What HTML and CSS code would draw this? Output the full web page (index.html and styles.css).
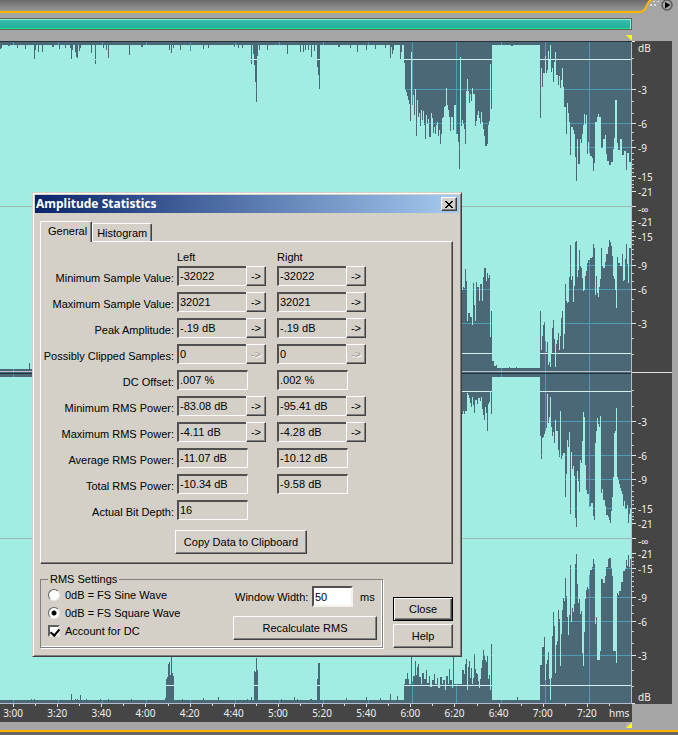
FILE: index.html
```
<!DOCTYPE html>
<html lang="en">

<head>
    <meta charset="UTF-8">
    <meta name="viewport" content="width=device-width, initial-scale=1.0">
    <title>Amplitude Statistics</title>
    <link rel="stylesheet" href="styles.css">
</head>

<body>
    <div class="editor">
        <header class="top">
            <div class="top-bar"></div>
            <svg class="top-end" width="46" height="18" viewBox="632 0 46 18">
                <defs>
                    <linearGradient id="metal" x1="0" y1="0" x2="0" y2="1">
                        <stop offset="0" stop-color="#6b6b6b" />
                        <stop offset="1" stop-color="#989898" />
                    </linearGradient>
                </defs>
                <path d="M632 0H649L644 9Q643 11 640 11H632Z" fill="url(#metal)" />
                <path d="M632 12H640Q643 12 645 9L648 3Q650 0 653 -1" fill="none" stroke="#ffb400" stroke-width="2" />
                <path d="M650 4h2v2h-2zM654 4h2v2h-2zM653 1h2v1h-2zM657 1h2v1h-2z" fill="#ddd" />
                <circle cx="667" cy="5" r="5" fill="#aaa" stroke="#5c5c5c" stroke-width="1.5" />
                <path d="M665 2L670.500 5L665 8.500Z" fill="#000" />
            </svg>
        </header>

        <div class="range">
            <div class="range-bar"></div>
        </div>
        <div class="marker-row">
            <svg width="6" height="6" viewBox="0 0 6 6"><path d="M0 0H6V6Z" fill="#ff0" /></svg>
        </div>

        <div class="wave-row">
            <svg class="wave" viewBox="0 41 632 663" preserveAspectRatio="none" shape-rendering="crispEdges">
                <clipPath id="quiet">
                    <!-- left channel, upper half -->
                    <path d="M0 41V49H1V48H2V45H8V46h2V45H17V48h1V45H25V49h1V45H34V60h1V50h1V45H38V52h1V45H42V52h1V45H52V47h2V45H59V49h1V45H65V48h1V45H70V48h1V60h1V50h1V45H75V52h1V57h1V58h1V45H79V51h1V48h1V45H91V53h1V45H95V64h1V45H103V48h1V45H106V50h1V45h1V58h1V45H129V55h1V45H141V47h2V45H169V50h1V45h1V53h1V45h1V48h1V45H180V50h1V45H190V51h1V45H203V49h1V45H208V48h1V45H234V47h1V45H238V48h1V45h3V48h1V45H251V64h1V45h1V54h1V65h1V82h1V102h1V56h1V45H259V50h1V45H267V50h1V45H287V54h1V45H300V52h1V45h2V52h1V45h1V50h1V45h2V50h1V45h2V57h1V45h2V51h1V45H317V67h1V75h1V89h1V45H338V47h2V45H350V48h1V45H357V52h1V45H366V50h1V45H375V49h1V45H385V48h1V45H390V58h1V47h1V54h1V50h1V45H400V59h1V52h1V45H404V63h1V90h1V92h1V96h1V100h1V104h1V121h1V52h1V105h1V95h1V115h1V89h1V136h1V100h1V117h1V113h1V126h1V110h1V120h1V111h1V125h1V139h1V115h1V124h1V119h1V137H431V113h1V118h1V133h1V127h1V134h1V125h1V122h1V136h1V130h1V144h1V134h1V118h1V117h1V107h1V106h1V88h1V105h1V110h1V117h1V131h1V117H453V130h1V105H456V134H458V142h1V169h1V57h1V126h1V120h1V124h1V129h1V144h1V91h1V79h1V91h1V103h1V94h1V101h1V88h1V94H475V126h1V121h1V115h1V111h1V118h1V124h1V112h1V122h1V129h1V136h1V146H487V144h1V125h1V121h1V64h1V109h1V45H511V46h2V45H540V118h1V68h1V87h1V73H545V56h1V73h1V70h1V51h1V60h1V45h1V72h1V68h1V82h1V62h1V52h1V75H558V85h1V76h1V88h1V80h1V68h1V87h1V107H566V134h1V103h1V113h1V122h1V155h1V127H573V130h1V134h1V157h1V181h1V139h1V164H580V139h1V143h1V134h1V125h1V114h1V124h1V115h1V154h1V142h1V153h1V156H592V158h1V171h1V163h1V122H597V117h1V114h1V117H601V148H603V139H605V135h1V154h1V161H609V165H611V162H613V149h1V138h1V100H617V143h1V150H620V139H622V155H624V151H626V170h1V153H629V162H632V41Z" />
                    <!-- left channel, lower half -->
                    <path d="M0 374V369H29V363h1V369H461V290H463V287h1V288h1V269h1V281h1V321h1V313H470V317H472V325h1V283h1V305h1V321h1V282h1V287H479V301h1V284H482V301h1V277h1V268H486V281h1V273h1V278h1V275h1V337h1V311h1V361H494V366H496V365h1V368H509V367h1V368H516V367h1V368H540V311h1V350h1V336h1V325h1V322h1V341h1V352h1V342h1V365h1V362h1V367h1V354h1V328h1V320h1V339h1V367h1V344h1V340h1V333h1V350h1V336h1V318h1V311h1V349h1V334h1V284h1V301h1V303h1V302h1V277h1V245h1V280h1V276h1V302h1V286h1V242h1V241h1V277h1V270h1V250h1V266h1V268h1V278h1V291h1V290h1V276h1V271h1V263h1V260H590V258H592V257h1V244h1V248h1V295h1V276h1V293h1V297h1V287h1V279h1V248h1V266h1V268H605V262h1V254H608V247h1V240h1V242h1V246h1V256h1V276h1V279h1V290h1V308h1V257h1V263H620V266H622V254h1V281h1V280h1V259h1V244h1V264h1V283h1V248H631V247H632V374Z" />
                    <!-- right channel, upper half -->
                    <path d="M0 373V377H461V414H463V411h1V414h1V411H467V393h1V395h1V398h1V403h1V407h1V397h1V405h1V413h1V400H477V404h1V398H480V401h1V397h1V409h1V415h1V420h1V407h1V413h1V431h1V404h1V402h1V391h1V414h1V377H540V436h1V459h1V438h1V437h1V434h1V431h1V428h1V394h1V423h1V417h1V397h1V427h1V436h1V432h1V443h1V420h1V431H558V450h1V457h1V411h1V459h1V456h1V453H565V497h1V474h1V440h1V447h1V432h1V514h1V452h1V469h1V466h1V476h1V518h1V527h1V471h1V481h1V492h1V460h1V463h1V441h1V412h1V417h1V465h1V490h1V494H589V507h1V506h1V503H593V516h1V520h1V443h1V431h1V418h1V424h1V427h1V416h1V493h1V489h1V500H605V506h1V515H608V517h1V520h1V523h1V511h1V497h1V477h1V433h1V431h1V408h1V477h1V480h1V484h1V488h1V491h1V494h1V506h1V501h1V509H627V505h1V523h1V514h1V509H632V373Z" />
                    <!-- right channel, lower half -->
                    <path d="M0 703V700H31V699h1V700H34V699h1V700H71V694h1V700H75V699h1V700h1V699h1V700H80V695h1V700H86V699h1V700H100V699h1V700H108V699h1V700H131V699h1V700H165V698h1V679h1V677h1V664h1V662h1V675h1V656h1V673h1V676h1V700H182V699h1V700H203V698h1V700H218V697h1V700H247V699h1V700H251V697h1V700H254V671h1V672h1V658h1V670h1V700H281V699h1V700H294V697h1V700H297V699h1V700H310V699h2V700H317V679h1V663h2V700H346V698h1V700H366V697h1V700H380V698h1V700H390V694h1V700H397V696h1V700H404V684h1V679h2V673h1V679h1V684h2V655h1V681h1V676h2V661h1V675h1V667h1V664h1V677h2V684h1V673h2V679h2V670h1V683h2V676h1V687h2V680h2V674h1V684h2V678h1V688h2V677h2V684h1V680h2V690h1V676h2V684h1V669h1V680h2V688h1V657h1V684H462V670H464V674h1V664h1V659h1V690h1V667h1V661h1V678h1V668h1V684h1V678h1V654h1V669h1V673h1V674h1V681h1V688h1V679h1V668h1V660h1V650h1V655h1V660h1V662h1V656h1V679h1V675h1V690h1V644h1V700H517V697h1V700H540V665H542V647H544V637h1V680h1V664h1V660h1V652h1V679h1V700h1V678h1V636h1V612h1V626h1V673h1V645h1V641h1V610h1V619h1V666h1V634h1V610h1V598h1V601h1V578h1V596h1V617h1V635h1V615h1V565h1V622h1V608h1V612h1V604h1V564h1V554h1V584h1V603h1V599h1V614h1V611h1V653h1V666h1V632h1V599h1V590h1V587h1V589h1V575h1V570H592V567h1V559h1V564h1V624h1V617h1V660H600V651h1V579H603V583H605V576h1V567H608V559h1V558H611V568h1V576h1V651H616V663h1V593h1V595h1V591H621V582H623V571H625V569h1V560h1V566h1V555h1V567h1V559H632V703Z" />
                </clipPath>
                <rect x="0" y="41" width="632" height="663" fill="#a1ede3" />
                <g clip-path="url(#quiet)">
                    <rect x="0" y="41" width="632" height="663" fill="#4b6877" />
                    <path class="grid" d="M0 89.500H632M0 123.500H632M0 147.500H632M0 265.500H632M0 289.500H632M0 323.500H632M0 421.500H632M0 455.500H632M0 479.500H632M0 508.500H632M0 568.500H632M0 597.500H632M0 621.500H632M0 655.500H632" />
                    <path class="grid" d="M13.500 41V704M58.500 41V704M102.500 41V704M146.500 41V704M190.500 41V704M235.500 41V704M279.500 41V704M323.500 41V704M368.500 41V704M412.500 41V704M456.500 41V704M501.500 41V704M545.500 41V704M589.500 41V704" />
                    <path class="clip-line" d="M0 59.500H632M0 353.500H632M0 391.500H632M0 685.500H632" />
                </g>
                <path d="M0 206.500H632M0 538.500H632" stroke="#9db9b4" />
                <path d="M0 41.500H632M0 373.500H632" stroke="#24333b" />
                <path d="M0 371.500H632" stroke="#b9bdcc" />
                <path d="M0 703.500H632M631.500 42V704" stroke="#b3bdd2" />
            </svg>
            <svg class="db-ruler" width="40" height="663" viewBox="632 41 40 663">
                <path d="M632 41.500h3M632 89.500h4M632 123.500h4M632 147.500h4M632 176.500h4M632 191.500h4M632 206.500h4M632 221.500h4M632 236.500h4M632 265.500h4M632 289.500h4M632 323.500h4M632 372.500h40M632 421.500h4M632 455.500h4M632 479.500h4M632 508.500h4M632 523.500h4M632 538.500h4M632 553.500h4M632 568.500h4M632 597.500h4M632 621.500h4M632 655.500h4M632 703.500h3" stroke="#e4e4e4" />
                <path d="M632 58.500h2M632 74.500h2M632 101.500h2M632 113.500h2M632 132.500h2M632 140.500h2M632 153.500h2M632 159.500h2M632 164.500h2M632 168.500h2M632 172.500h2M632 180.500h2M632 184.500h2M632 187.500h2M632 225.500h2M632 229.500h2M632 232.500h2M632 240.500h2M632 244.500h2M632 249.500h2M632 254.500h2M632 259.500h2M632 273.500h2M632 281.500h2M632 299.500h2M632 311.500h2M632 338.500h2M632 354.500h2M632 390.500h2M632 406.500h2M632 433.500h2M632 445.500h2M632 464.500h2M632 472.500h2M632 485.500h2M632 491.500h2M632 496.500h2M632 500.500h2M632 504.500h2M632 512.500h2M632 516.500h2M632 519.500h2M632 557.500h2M632 561.500h2M632 564.500h2M632 572.500h2M632 576.500h2M632 581.500h2M632 586.500h2M632 591.500h2M632 605.500h2M632 613.500h2M632 631.500h2M632 643.500h2M632 670.500h2M632 686.500h2" stroke="#ccc" />
                <g class="db-text">
                    <text x="638" y="52">dB</text>
                    <text x="638" y="94">-3</text>
                    <text x="638" y="128">-6</text>
                    <text x="638" y="152">-9</text>
                    <text x="638" y="181">-15</text>
                    <text x="638" y="196">-21</text>
                    <text x="638" y="213">-∞</text>
                    <text x="638" y="226">-21</text>
                    <text x="638" y="241">-15</text>
                    <text x="638" y="270">-9</text>
                    <text x="638" y="294">-6</text>
                    <text x="638" y="328">-3</text>
                    <text x="638" y="426">-3</text>
                    <text x="638" y="460">-6</text>
                    <text x="638" y="484">-9</text>
                    <text x="638" y="513">-15</text>
                    <text x="638" y="528">-21</text>
                    <text x="638" y="545">-∞</text>
                    <text x="638" y="558">-21</text>
                    <text x="638" y="573">-15</text>
                    <text x="638" y="602">-9</text>
                    <text x="638" y="626">-6</text>
                    <text x="638" y="660">-3</text>
                    <text x="638" y="701">dB</text>
                </g>
            </svg>
        </div>

        <div class="time-ruler">
            <span>3:00</span>
            <span>3:20</span>
            <span>3:40</span>
            <span>4:00</span>
            <span>4:20</span>
            <span>4:40</span>
            <span>5:00</span>
            <span>5:20</span>
            <span>5:40</span>
            <span>6:00</span>
            <span>6:20</span>
            <span>6:40</span>
            <span>7:00</span>
            <span>7:20</span>
            <em>hms</em>
        </div>
        <div class="marker-row bottom">
            <svg width="6" height="6" viewBox="0 0 6 6"><path d="M0 0H6L0 6Z" fill="#b7a9b4" /><path d="M6 0V6H0Z" fill="#ff0" /></svg>
        </div>
        <footer class="foot"></footer>

        <form class="dialog">
            <div class="title">
                <h1>Amplitude Statistics</h1>
                <button type="button" class="close-x" aria-label="Close window">
                    <svg width="8" height="7" viewBox="0 0 8 7" shape-rendering="crispEdges"><path d="M0 0h2v1h1v1h2v-1h1v-1h2v1h-1v1h-1v1h-1v1h1v1h1v1h1v1h-2v-1h-1v-1h-2v1h-1v1h-2v-1h1v-1h1v-1h1v-1h-1v-1h-1v-1h-1z" /></svg>
                </button>
            </div>

            <div class="tabs">
                <button type="button" class="tab current">General</button>
                <button type="button" class="tab">Histogram</button>
            </div>

            <div class="panel">
                <div class="stats">
                    <span></span><span class="head">Left</span><span class="head">Right</span>

                    <label for="min-l">Minimum Sample Value:</label>
                    <div class="cell"><input id="min-l" readonly value="-32022"><button type="button">-&gt;</button></div>
                    <div class="cell"><input aria-label="Minimum Sample Value, right" readonly value="-32022"><button type="button">-&gt;</button></div>

                    <label for="max-l">Maximum Sample Value:</label>
                    <div class="cell"><input id="max-l" readonly value="32021"><button type="button">-&gt;</button></div>
                    <div class="cell"><input aria-label="Maximum Sample Value, right" readonly value="32021"><button type="button">-&gt;</button></div>

                    <label for="peak-l">Peak Amplitude:</label>
                    <div class="cell"><input id="peak-l" readonly value="-.19 dB"><button type="button">-&gt;</button></div>
                    <div class="cell"><input aria-label="Peak Amplitude, right" readonly value="-.19 dB"><button type="button">-&gt;</button></div>

                    <label for="clip-l">Possibly Clipped Samples:</label>
                    <div class="cell"><input id="clip-l" readonly value="0"><button type="button" disabled>-&gt;</button></div>
                    <div class="cell"><input aria-label="Possibly Clipped Samples, right" readonly value="0"><button type="button" disabled>-&gt;</button></div>

                    <label for="dc-l">DC Offset:</label>
                    <div class="cell"><input id="dc-l" readonly value=".007 %"></div>
                    <div class="cell"><input aria-label="DC Offset, right" readonly value=".002 %"></div>

                    <label for="minrms-l">Minimum RMS Power:</label>
                    <div class="cell"><input id="minrms-l" readonly value="-83.08 dB"><button type="button">-&gt;</button></div>
                    <div class="cell"><input aria-label="Minimum RMS Power, right" readonly value="-95.41 dB"><button type="button">-&gt;</button></div>

                    <label for="maxrms-l">Maximum RMS Power:</label>
                    <div class="cell"><input id="maxrms-l" readonly value="-4.11 dB"><button type="button">-&gt;</button></div>
                    <div class="cell"><input aria-label="Maximum RMS Power, right" readonly value="-4.28 dB"><button type="button">-&gt;</button></div>

                    <label for="avg-l">Average RMS Power:</label>
                    <div class="cell"><input id="avg-l" readonly value="-11.07 dB"></div>
                    <div class="cell"><input aria-label="Average RMS Power, right" readonly value="-10.12 dB"></div>

                    <label for="total-l">Total RMS Power:</label>
                    <div class="cell"><input id="total-l" readonly value="-10.34 dB"></div>
                    <div class="cell"><input aria-label="Total RMS Power, right" readonly value="-9.58 dB"></div>

                    <label for="depth">Actual Bit Depth:</label>
                    <div class="cell"><input id="depth" readonly value="16"></div>
                </div>
                <button type="button" class="btn copy">Copy Data to Clipboard</button>
            </div>

            <div class="lower">
                <fieldset>
                    <legend>RMS Settings</legend>
                    <div class="options">
                        <label><input type="radio" name="wave">0dB = FS Sine Wave</label>
                        <label><input type="radio" name="wave" checked>0dB = FS Square Wave</label>
                        <label><input type="checkbox" checked>Account for DC</label>
                    </div>
                    <div class="window">
                        <div class="width-row">
                            <label for="width">Window Width:</label>
                            <input id="width" type="text" value="50">
                            <span>ms</span>
                        </div>
                        <button type="button" class="btn">Recalculate RMS</button>
                    </div>
                </fieldset>
                <div class="actions">
                    <button type="button" class="btn default">Close</button>
                    <button type="button" class="btn">Help</button>
                </div>
            </div>
        </form>
    </div>
</body>

</html>
```
FILE: styles.css
```
* {
    box-sizing: border-box;
    margin: 0;
    padding: 0;
}

body {
    background-color: #a5a5a5;
}

svg {
    display: block;
}

.editor {
    position: relative;
    overflow: hidden;
    font: 11px/14px "Liberation Sans", Arial, sans-serif;
    color: #000;
}

/* frame around the wave view */
.top {
    display: flex;
    height: 18px;
}

.top-bar {
    flex: 1;
    height: 13px;
    background: linear-gradient(#6b6b6b, #989898);
    border-bottom: 2px solid #ffb400;
}

.range,
.marker-row {
    padding-right: 46px;
}

.range-bar {
    height: 12px;
    background: linear-gradient(#3bbdb0, #1fae9c);
    border: solid #56665f;
    border-width: 1px 1px 1px 0;
    box-shadow: inset -1px 1px #8ff0d0, inset 0 -1px #2fe08a;
}

.marker-row {
    display: flex;
    justify-content: flex-end;
    align-items: flex-end;
    height: 11px;
}

.wave-row {
    display: flex;
    padding-right: 6px;
}

.wave {
    flex: 1;
    min-width: 0;
    height: 663px;
}

.grid {
    stroke: #4f9ab5;
}

.clip-line {
    stroke: #d4eef2;
}

.db-ruler {
    overflow: visible;
    background-color: #454545;
}

.db-text {
    font: 10px "Noto Sans", sans-serif;
    fill: #f0f0f0;
}

.time-ruler {
    display: flex;
    height: 18px;
    margin-right: 46px;
    overflow: hidden;
    background-color: #454545;
    font: 10px/18px "Noto Sans", sans-serif;
    color: #f0f0f0;
}

.time-ruler span {
    position: relative;
    flex: 1;
    text-align: center;
}

.time-ruler span:first-child {
    margin-left: -9px;
}

.time-ruler span::before,
.time-ruler span::after {
    content: "";
    position: absolute;
    top: 0;
    left: 50%;
    width: 1px;
    height: 3px;
    background-color: #ddd;
}

.time-ruler span::after {
    left: 100%;
    height: 2px;
}

.time-ruler em {
    width: 23px;
    font-style: normal;
}

.marker-row.bottom {
    align-items: flex-start;
    height: 8px;
}

.foot {
    height: 5px;
    background-color: #6b6462;
    border-top: 2px solid #ffb400;
}

/* dialog */
.dialog {
    position: absolute;
    top: 192px;
    left: 32px;
    width: 430px;
    padding: 2px;
    background-color: #d4d0c8;
    border: 1px solid;
    border-color: #d4d0c8 #404040 #404040 #d4d0c8;
    box-shadow: inset 1px 1px #fff, inset -1px -1px #808080;
}

.title {
    display: flex;
    align-items: center;
    justify-content: space-between;
    height: 18px;
    padding: 0 2px 0 1px;
    background: linear-gradient(90deg, #0a246a, #a6caf0);
}

.title h1 {
    font: bold 12px/18px "Noto Sans", sans-serif;
    color: #fff;
}

button {
    font: inherit;
    color: #000;
    background-color: #d4d0c8;
    border: 1px solid;
    border-color: #fff #404040 #404040 #fff;
    box-shadow: inset -1px -1px #808080;
}

.close-x {
    display: flex;
    align-items: center;
    justify-content: center;
    width: 16px;
    height: 14px;
}

.tabs {
    display: flex;
    align-items: flex-end;
    height: 28px;
    margin-left: 5px;
}

.tab {
    height: 18px;
    padding: 0 4px;
    border-bottom: 0;
    border-radius: 2px 2px 0 0;
    box-shadow: inset -1px 0 #808080;
}

.tab.current {
    position: relative;
    height: 21px;
    margin-bottom: -1px;
    padding: 0 4px 2px 7px;
}

.panel {
    height: 323px;
    margin: 0 6px 0 5px;
    padding: 8px 0 0 1px;
    border: 1px solid;
    border-color: #fff #404040 #404040 #fff;
    box-shadow: inset -1px -1px #808080;
}

.stats {
    display: grid;
    grid-template-columns: 135px 100px 100px;
    grid-template-rows: 10px;
    grid-auto-rows: 20px;
    row-gap: 6px;
}

.stats label {
    padding: 5px 3px 0 0;
    text-align: right;
    white-space: nowrap;
}

.cell {
    display: flex;
}

.cell input {
    width: 71px;
    padding: 0 0 2px 1px;
    font: inherit;
    background-color: #d4d0c8;
    border: 2px solid;
    border-color: #505050 #fff #fff #505050;
    border-right-width: 1px;
    border-bottom-width: 1px;
    outline: 0;
}

.cell button {
    width: 20px;
    margin-left: -2px;
}

.cell button:disabled {
    color: #a09c94;
    text-shadow: 1px 1px #fff;
}

.btn {
    display: block;
    width: 100%;
    height: 24px;
}

.btn.copy {
    width: 132px;
    margin: 10px 0 0 133px;
}

.btn.default {
    border-color: #000;
    box-shadow: inset 1px 1px #fff, inset -1px -1px #404040, inset -2px -2px #808080;
}

.lower {
    display: flex;
    gap: 10px;
    margin: 8px 5px 6px;
}

fieldset {
    display: flex;
    justify-content: space-between;
    width: 343px;
    height: 76px;
    padding: 0 5px 0 7px;
    border: 1px solid #808080;
    box-shadow: inset -1px -1px #fff, 1px 1px #fff;
}

legend {
    padding: 0 2px;
}

.options {
    display: grid;
    grid-template-rows: 18px 17px 20px;
}

.options label {
    display: flex;
    align-items: center;
    gap: 5px;
}

.options input {
    appearance: none;
    width: 12px;
    height: 12px;
    background-color: #fff;
    border: 1px solid;
    border-color: #606060 #e8e6e0 #e8e6e0 #606060;
    border-radius: 50%;
}

.options input[type="radio"]:checked {
    background-image: radial-gradient(circle, #000 2px, #fff 3px);
}

.options input[type="checkbox"] {
    position: relative;
    border-width: 2px;
    border-radius: 0;
}

.options input[type="checkbox"]::after {
    content: "";
    position: absolute;
    left: 2px;
    top: 0;
    width: 4px;
    height: 7px;
    border: solid #000;
    border-width: 0 2px 2px 0;
    transform: rotate(40deg);
}

.window {
    width: 144px;
}

.width-row {
    display: flex;
    align-items: center;
    height: 21px;
    margin-bottom: 9px;
    padding-left: 2px;
    white-space: nowrap;
}

.width-row input {
    width: 41px;
    height: 21px;
    margin: 0 7px 0 auto;
    padding-left: 1px;
    font: inherit;
    background-color: #fff;
    border: 2px solid;
    border-color: #505050 #f4f2ee #f4f2ee #505050;
}

.width-row span {
    width: 17px;
}

.actions {
    display: flex;
    flex-direction: column;
    gap: 3px;
    width: 60px;
    padding-top: 25px;
}
```
